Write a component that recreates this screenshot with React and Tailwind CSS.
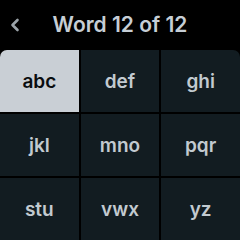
import React from "react";

const keys = ["abc", "def", "ghi", "jkl", "mno", "pqr", "stu", "vwx", "yz"];

export default function App() {
  return (
    <div
      className="w-[240px] h-[240px] bg-black flex flex-col overflow-hidden"
      style={{ fontFamily: "Inter, 'Noto Sans', sans-serif" }}
    >
      <div className="h-[50px] relative flex items-center justify-center">
        <svg
          className="absolute left-[10px] top-[18px]"
          width="10"
          height="14"
          viewBox="0 0 10 14"
          fill="none"
        >
          <path d="M7.5 2 L2.5 7 L7.5 12" stroke="#9ba3a9" strokeWidth="2.6" strokeLinecap="round" strokeLinejoin="round" />
        </svg>
        <span className="text-[21px] font-semibold text-[#c6ced5] mt-[-1px]">
          Word 12 of 12
        </span>
      </div>
      <div className="flex-1 grid grid-cols-3 grid-rows-3 gap-[2px] rounded-t-[7px] overflow-hidden">
        {keys.map((k, i) => (
          <div
            key={k}
            className={
              i === 0
                ? "bg-[#c9cfd5] text-[#0a0d0f] flex items-center justify-center text-[19px] font-semibold"
                : "bg-[#121c21] text-[#c2cad0] flex items-center justify-center text-[19px] font-semibold"
            }
          >
            <span className="mt-[3px]">{k}</span>
          </div>
        ))}
      </div>
    </div>
  );
}
